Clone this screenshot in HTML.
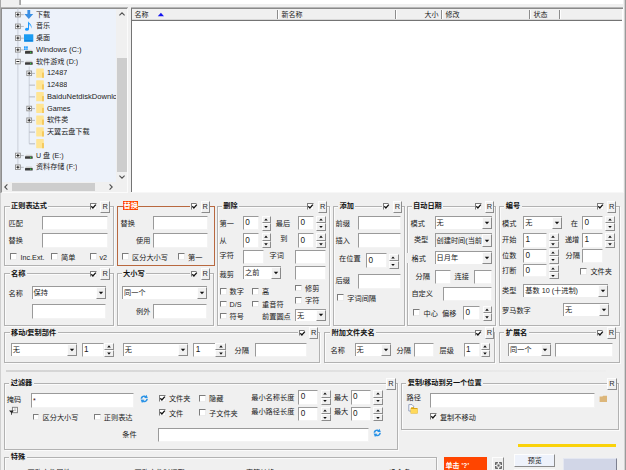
<!DOCTYPE html>
<html lang="zh-CN"><head><meta charset="utf-8"><title>Bulk Rename Utility</title>
<style>
html,body{margin:0;padding:0;}
body{width:626px;height:470px;overflow:hidden;background:#f0f0f0;position:relative;font-family:"Liberation Sans", "Noto Sans CJK SC", sans-serif;font-size:7.2px;color:#1a1a1a;}
#root{position:absolute;left:0;top:0;width:626px;height:470px;overflow:hidden;background:#f0f0f0;}
#root div{position:absolute;box-sizing:border-box;}
.t{white-space:nowrap;color:#222;}
.gt{background:#f0f0f0;font-weight:bold;color:#111;}
.gb{border:1px solid #b2b2b2;box-shadow:inset 1px 1px 0 #fbfbfb, 1px 1px 0 #fbfbfb;}
.mask{background:#f0f0f0;}
.ed{background:#fff;border:1px solid;border-color:#9a9a9a #f3f3f3 #f3f3f3 #9a9a9a;overflow:hidden;}
.et{position:absolute;left:1px;top:0;white-space:nowrap;font-size:7.2px;color:#222;}
.co{border-right-width:0;border-bottom-width:0;}
.co .cb{position:absolute;right:0;top:0;bottom:0;background:#f0f0f0;border:1px solid;border-color:#fdfdfd #8a8a8a #8a8a8a #fdfdfd;box-sizing:border-box;}
.co .cb svg{position:absolute;left:50%;top:50%;margin:-2px 0 0 -3.4px;}
.btn{background:#f0f0f0;border:1px solid;border-color:#fdfdfd #8c8c8c #8c8c8c #fdfdfd;}
.rb{text-align:center;font-size:7.4px;color:#2a2a2a;}
.sp i{position:absolute;left:50%;top:50%;width:0;height:0;border:1.7px solid transparent;margin-left:-1.7px;}
.sp i.up{border-bottom:2px solid #111;border-top:none;margin-top:-1.2px;}
.sp i.dn{border-top:2px solid #111;border-bottom:none;margin-top:-0.8px;}
.ck{background:#fff;border:1px solid;border-color:#7c7c7c #ececec #ececec #7c7c7c;}
.ck svg{position:absolute;left:-1px;top:-1px;}
.tr{white-space:nowrap;color:#222;height:12px;line-height:12px;font-size:7.6px;}
.pm{background:#fff;border:1px solid #9a9a9a;}
.pm:before{content:"";position:absolute;left:1px;right:1px;top:50%;margin-top:-0.5px;height:1px;background:#333;}
.pm.plus:after{content:"";position:absolute;top:1px;bottom:1px;left:50%;margin-left:-0.5px;width:1px;background:#333;}
.dv{border-left:1px dotted #b8b8b8;width:0;}
.dh{border-top:1px dotted #b8b8b8;height:0;}
.fold{background:#ffe28e;border-radius:0.5px;}
.fold:after{content:"";position:absolute;right:0;bottom:0;width:2px;height:5px;background:#f5c85a;}
.hs{background:#fff;border-left:1px solid #8c8c8c;width:2px;}
</style></head><body><div id="root">

<div class="" style="left:21px;top:0px;width:602px;height:4px;background:#fff;"></div>
<div class="" style="left:19px;top:0px;width:2px;height:5px;background:linear-gradient(90deg,#b9b9b9,#a0a0a0);"></div>
<div class="" style="left:0px;top:0px;width:1px;height:193px;background:#a8a8a8;"></div>
<div class="" style="left:0px;top:193px;width:1px;height:277px;background:#d0d0d0;"></div>
<div class="" style="left:624px;top:0px;width:1px;height:470px;background:#d2d2d2;"></div>
<div class="" style="left:625px;top:0px;width:1px;height:470px;background:#9a9a9a;"></div>
<div class="" style="left:1px;top:7px;width:127px;height:186px;background:#f0f0f0;border:1px solid;border-color:#8a8a8a #fbfbfb #fbfbfb #8e8e8e;border-top:2px solid #8e8e8e;border-image:none;"></div>
<div class="" style="left:1px;top:7px;width:127px;height:1px;background:#b6b6b6;"></div>
<div class="" style="left:2px;top:9px;width:114px;height:173px;background:#edf2fa;"></div>
<div class="" style="left:117px;top:58px;width:10px;height:114.3px;background:#cdcdcd;"></div>
<svg style="position:absolute;left:118px;top:11px" width="8" height="6" viewBox="0 0 8 6"><path d="M1.4 4.4 L4 1.8 L6.6 4.4" fill="none" stroke="#505050" stroke-width="1.1"/></svg>
<svg style="position:absolute;left:118px;top:174px" width="8" height="6" viewBox="0 0 8 6"><path d="M1.4 1.6 L4 4.2 L6.6 1.6" fill="none" stroke="#505050" stroke-width="1.1"/></svg>
<div class="" style="left:12px;top:183px;width:83px;height:8.3px;background:#cdcdcd;"></div>
<svg style="position:absolute;left:3px;top:183px" width="6" height="8" viewBox="0 0 6 8"><path d="M4.4 1.4 L1.8 4 L4.4 6.6" fill="none" stroke="#505050" stroke-width="1.1"/></svg>
<svg style="position:absolute;left:108px;top:183px" width="6" height="8" viewBox="0 0 6 8"><path d="M1.6 1.4 L4.2 4 L1.6 6.6" fill="none" stroke="#505050" stroke-width="1.1"/></svg>
<svg style="position:absolute;left:0;top:0" width="128" height="193" viewBox="0 0 128 193"><path d="M17.9 8.5 V167.12 M29.2 66.46 V143.64" stroke="#c9ced8" stroke-width="1" fill="none"/><path d="M17.9 14.7 H23.8" stroke="#b4b8c0" stroke-width="1" fill="none"/><rect x="15.5" y="12.3" width="4.8" height="4.6" fill="#fff" stroke="#8f8f8f" stroke-width="0.9"/><path d="M16.4 14.6 H19.4 M17.9 13.1 V16.1" stroke="#222" stroke-width="1" fill="none"/><path transform="translate(23.8 9.7)" d="M3.6 0.2 H6.4 V4.4 H9.4 L5 9.4 L0.6 4.4 H3.6 Z" fill="#3a8fe4"/><path d="M17.9 26.44 H23.8" stroke="#b4b8c0" stroke-width="1" fill="none"/><rect x="15.5" y="24.04" width="4.8" height="4.6" fill="#fff" stroke="#8f8f8f" stroke-width="0.9"/><path d="M16.4 26.34 H19.4 M17.9 24.84 V27.84" stroke="#222" stroke-width="1" fill="none"/><g transform="translate(25 21.24)"><ellipse cx="1.9" cy="8" rx="1.9" ry="1.6" fill="#1e9bff"/><path d="M3 8 V0 C3.6 1.6 7.2 2.6 6.6 7.4 C6.2 4.6 4.8 4 4 3.8 V8 Z" fill="#1e9bff"/><path d="M4 3.6 C5 3.8 6 4.6 6.3 6.2 C6.4 4 5 3 4 2.6 Z" fill="#9ad0ff"/></g><path d="M17.9 38.18 H23.8" stroke="#b4b8c0" stroke-width="1" fill="none"/><rect x="15.5" y="35.78" width="4.8" height="4.6" fill="#fff" stroke="#8f8f8f" stroke-width="0.9"/><path d="M16.4 38.08 H19.4 M17.9 36.58 V39.58" stroke="#222" stroke-width="1" fill="none"/><g transform="translate(24 34.28)"><rect x="0" y="0" width="9.3" height="7.5" fill="#1b9cf2"/><rect x="0.6" y="6" width="8.1" height="1" fill="#1078d0"/></g><path d="M17.9 49.92 H23.8" stroke="#b4b8c0" stroke-width="1" fill="none"/><rect x="15.5" y="47.52" width="4.8" height="4.6" fill="#fff" stroke="#8f8f8f" stroke-width="0.9"/><path d="M16.4 49.82 H19.4 M17.9 48.32 V51.32" stroke="#222" stroke-width="1" fill="none"/><g transform="translate(25 49.72)"><rect x="-1" y="-3.4" width="1.7" height="1.7" fill="#1e9bff"/><rect x="1.1" y="-3.4" width="1.7" height="1.7" fill="#1e9bff"/><rect x="-1" y="-1.4" width="1.7" height="1.7" fill="#1e9bff"/><rect x="1.1" y="-1.4" width="1.7" height="1.7" fill="#1e9bff"/><path d="M1 0 H6.8 L7.7 1.4 H0 Z" fill="#d2d2d2"/><rect x="0" y="1.4" width="7.7" height="2.6" rx="0.5" fill="#3c3c3c"/><rect x="5" y="2.1" width="1.3" height="1.3" fill="#2fc83c"/></g><path d="M17.9 61.66 H23.8" stroke="#b4b8c0" stroke-width="1" fill="none"/><rect x="15.5" y="59.26" width="4.8" height="4.6" fill="#fff" stroke="#8f8f8f" stroke-width="0.9"/><path d="M16.4 61.56 H19.4" stroke="#222" stroke-width="1" fill="none"/><g transform="translate(25 61.46)"><path d="M1 -0.6 H6.8 L7.7 0.8 H0 Z" fill="#d2d2d2"/><rect x="0" y="0.8" width="7.7" height="2.6" rx="0.5" fill="#3c3c3c"/><rect x="5" y="1.5" width="1.3" height="1.3" fill="#2fc83c"/></g><path d="M29.2 73.4 H35" stroke="#b4b8c0" stroke-width="1" fill="none"/><rect x="26.8" y="71" width="4.8" height="4.6" fill="#fff" stroke="#8f8f8f" stroke-width="0.9"/><path d="M27.7 73.3 H30.7 M29.2 71.8 V74.8" stroke="#222" stroke-width="1" fill="none"/><rect x="36.2" y="68.6" width="7.6" height="9.2" rx="0.4" fill="#ffe594"/><rect x="42.2" y="72.6" width="1.6" height="5.2" fill="#f3c451"/><path d="M29.2 85.14 H35" stroke="#b4b8c0" stroke-width="1" fill="none"/><rect x="36.2" y="80.34" width="7.6" height="9.2" rx="0.4" fill="#ffe594"/><rect x="42.2" y="84.34" width="1.6" height="5.2" fill="#f3c451"/><path d="M29.2 96.88 H35" stroke="#b4b8c0" stroke-width="1" fill="none"/><rect x="36.2" y="92.08" width="7.6" height="9.2" rx="0.4" fill="#ffe594"/><rect x="42.2" y="96.08" width="1.6" height="5.2" fill="#f3c451"/><path d="M29.2 108.62 H35" stroke="#b4b8c0" stroke-width="1" fill="none"/><rect x="26.8" y="106.22" width="4.8" height="4.6" fill="#fff" stroke="#8f8f8f" stroke-width="0.9"/><path d="M27.7 108.52 H30.7 M29.2 107.02 V110.02" stroke="#222" stroke-width="1" fill="none"/><rect x="36.2" y="103.82" width="7.6" height="9.2" rx="0.4" fill="#ffe594"/><rect x="42.2" y="107.82" width="1.6" height="5.2" fill="#f3c451"/><path d="M29.2 120.36 H35" stroke="#b4b8c0" stroke-width="1" fill="none"/><rect x="26.8" y="117.96" width="4.8" height="4.6" fill="#fff" stroke="#8f8f8f" stroke-width="0.9"/><path d="M27.7 120.26 H30.7 M29.2 118.76 V121.76" stroke="#222" stroke-width="1" fill="none"/><rect x="36.2" y="115.56" width="7.6" height="9.2" rx="0.4" fill="#ffe594"/><rect x="42.2" y="119.56" width="1.6" height="5.2" fill="#f3c451"/><path d="M29.2 132.1 H35" stroke="#b4b8c0" stroke-width="1" fill="none"/><rect x="36.2" y="127.3" width="7.6" height="9.2" rx="0.4" fill="#ffe594"/><rect x="42.2" y="131.3" width="1.6" height="5.2" fill="#f3c451"/><path d="M29.2 143.84 H35" stroke="#b4b8c0" stroke-width="1" fill="none"/><rect x="36.2" y="139.04" width="7.6" height="9.2" rx="0.4" fill="#ffe594"/><rect x="42.2" y="143.04" width="1.6" height="5.2" fill="#f3c451"/><path d="M17.9 155.58 H23.8" stroke="#b4b8c0" stroke-width="1" fill="none"/><rect x="15.5" y="153.18" width="4.8" height="4.6" fill="#fff" stroke="#8f8f8f" stroke-width="0.9"/><path d="M16.4 155.48 H19.4 M17.9 153.98 V156.98" stroke="#222" stroke-width="1" fill="none"/><g transform="translate(25 155.38)"><path d="M1 -0.6 H6.8 L7.7 0.8 H0 Z" fill="#d2d2d2"/><rect x="0" y="0.8" width="7.7" height="2.6" rx="0.5" fill="#3c3c3c"/><rect x="5" y="1.5" width="1.3" height="1.3" fill="#2fc83c"/></g><path d="M17.9 167.32 H23.8" stroke="#b4b8c0" stroke-width="1" fill="none"/><rect x="15.5" y="164.92" width="4.8" height="4.6" fill="#fff" stroke="#8f8f8f" stroke-width="0.9"/><path d="M16.4 167.22 H19.4 M17.9 165.72 V168.72" stroke="#222" stroke-width="1" fill="none"/><g transform="translate(25 167.12)"><path d="M1 -0.6 H6.8 L7.7 0.8 H0 Z" fill="#d2d2d2"/><rect x="0" y="0.8" width="7.7" height="2.6" rx="0.5" fill="#3c3c3c"/><rect x="5" y="1.5" width="1.3" height="1.3" fill="#2fc83c"/></g></svg>
<div class="tr" style="left:36px;top:8.7px;font-size:7.1px;max-width:80.4px;overflow:hidden;">下载</div>
<div class="tr" style="left:36px;top:20.44px;font-size:7.1px;max-width:80.4px;overflow:hidden;">音乐</div>
<div class="tr" style="left:36px;top:32.18px;font-size:7.1px;max-width:80.4px;overflow:hidden;">桌面</div>
<div class="tr" style="left:36px;top:43.92px;font-size:7.6px;max-width:80.4px;overflow:hidden;">Windows (C:)</div>
<div class="tr" style="left:36px;top:55.66px;font-size:7.1px;max-width:80.4px;overflow:hidden;">软件游戏 (D:)</div>
<div class="tr" style="left:47px;top:67.4px;font-size:7.3px;max-width:69.4px;overflow:hidden;">12487</div>
<div class="tr" style="left:47px;top:79.14px;font-size:7.3px;max-width:69.4px;overflow:hidden;">12488</div>
<div class="tr" style="left:47px;top:90.88px;font-size:7.6px;max-width:69.4px;overflow:hidden;">BaiduNetdiskDownlc</div>
<div class="tr" style="left:47px;top:102.62px;font-size:7.3px;max-width:69.4px;overflow:hidden;">Games</div>
<div class="tr" style="left:47px;top:114.36px;font-size:7.1px;max-width:69.4px;overflow:hidden;">软件类</div>
<div class="tr" style="left:47px;top:126.1px;font-size:7.1px;max-width:69.4px;overflow:hidden;">天翼云盘下载</div>
<div class="tr" style="left:36px;top:149.58px;font-size:7.1px;max-width:80.4px;overflow:hidden;">U 盘 (E:)</div>
<div class="tr" style="left:36px;top:161.32px;font-size:7.1px;max-width:80.4px;overflow:hidden;">资料存储 (F:)</div>
<div class="" style="left:131px;top:7px;width:492px;height:185px;background:#fff;border-left:1px solid #747474;border-top:2px solid #8a8a8a;"></div>
<div class="" style="left:623px;top:7px;width:1px;height:186px;background:#f7f7f7;"></div>
<div class="" style="left:131px;top:192px;width:492px;height:1px;background:#f7f7f7;"></div>
<div class="" style="left:131px;top:7px;width:492px;height:1px;background:#b6b6b6;"></div>
<div class="" style="left:132px;top:9px;width:490px;height:12px;background:#f0f0f0;border-bottom:1px solid #747474;"></div>
<div class="" style="left:132px;top:19px;width:490px;height:1px;background:#d9d9d9;"></div>
<div class="hs" style="left:277.2px;top:9.6px;width:2px;height:9.8px;"></div>
<div class="hs" style="left:394.8px;top:9.6px;width:2px;height:9.8px;"></div>
<div class="hs" style="left:441.2px;top:9.6px;width:2px;height:9.8px;"></div>
<div class="hs" style="left:529.4px;top:9.6px;width:2px;height:9.8px;"></div>
<div class="hs" style="left:558.8px;top:9.6px;width:2px;height:9.8px;"></div>
<div class="t " style="top:9.7px;height:10px;line-height:10px;font-size:7px;left:134.5px;">名称</div>
<svg style="position:absolute;left:157px;top:12px" width="8" height="5" viewBox="0 0 8 5"><path d="M0.8 4.3 L3.9 0.8 L7 4.3 Z" fill="#1414f0"/></svg>
<div class="t " style="top:9.7px;height:10px;line-height:10px;font-size:7px;left:281.5px;">新名称</div>
<div class="t " style="top:9.7px;height:10px;line-height:10px;font-size:7px;right:187.4px;text-align:right;">大小</div>
<div class="t " style="top:9.7px;height:10px;line-height:10px;font-size:7px;left:445.5px;">修改</div>
<div class="t " style="top:9.7px;height:10px;line-height:10px;font-size:7px;left:533.5px;">状态</div>
<div class="gb" style="left:4.3px;top:205.8px;width:109.6px;height:59.9px;"></div>
<div class="t gt" style="left:9.5px;top:200.7px;height:10px;line-height:10px;font-size:7.2px;padding:0 1.5px 0 1.5px;">正则表达式</div>
<div class="mask" style="left:89.5px;top:205.3px;width:10.9px;height:3px;"></div>
<div class="ck" style="left:90px;top:203.3px;width:6.6px;height:6.6px;"><svg viewBox="0 0 7 7" width="7" height="7"><path d="M1.3 3.3 L2.9 5 L5.8 1.6" fill="none" stroke="#111" stroke-width="1.3"/></svg></div>
<div class="btn rb" style="left:100px;top:200.8px;width:10.2px;height:12.2px;line-height:10.6px">R</div>
<div class="t " style="top:218.9px;height:10px;line-height:10px;font-size:7.2px;left:8.5px;">匹配</div>
<div class="ed" style="left:41.8px;top:216px;width:66px;height:14px;"></div>
<div class="t " style="top:235.9px;height:10px;line-height:10px;font-size:7.2px;left:8.5px;">替换</div>
<div class="ed" style="left:41.8px;top:233.1px;width:66px;height:14.6px;"></div>
<div class="ck" style="left:10px;top:253.3px;width:6.6px;height:6.6px;"></div>
<div class="t " style="top:252.5px;height:10px;line-height:10px;font-size:7.2px;left:20.5px;">Inc.Ext.</div>
<div class="ck" style="left:51px;top:253.3px;width:6.6px;height:6.6px;"></div>
<div class="t " style="top:252.5px;height:10px;line-height:10px;font-size:7.2px;left:61px;">简单</div>
<div class="ck" style="left:90px;top:253.3px;width:6.6px;height:6.6px;"></div>
<div class="t " style="top:252.5px;height:10px;line-height:10px;font-size:7.2px;left:99.5px;">v2</div>
<div class="gb" style="left:116.5px;top:205.8px;width:98px;height:59.9px;border-color:#b8683f;box-shadow:none;"></div>
<div class="t gt" style="left:123px;top:201.3px;height:9px;line-height:9px;font-size:7.2px;background:#ff4500;color:#fff;padding:0 0.5px">替换</div>
<div class="mask" style="left:190px;top:205.3px;width:11px;height:3px;"></div>
<div class="ck" style="left:190.5px;top:203.3px;width:6.6px;height:6.6px;"><svg viewBox="0 0 7 7" width="7" height="7"><path d="M1.3 3.3 L2.9 5 L5.8 1.6" fill="none" stroke="#111" stroke-width="1.3"/></svg></div>
<div class="btn rb" style="left:200.6px;top:200.8px;width:9.4px;height:12.2px;line-height:10.6px">R</div>
<div class="t " style="top:218.9px;height:10px;line-height:10px;font-size:7.2px;left:120.5px;">替换</div>
<div class="ed" style="left:152.7px;top:216px;width:55.5px;height:14px;"></div>
<div class="t " style="top:235.9px;height:10px;line-height:10px;font-size:7.2px;right:475.6px;text-align:right;">使用</div>
<div class="ed" style="left:152.7px;top:233.1px;width:55.5px;height:14.6px;"></div>
<div class="ck" style="left:122px;top:253.3px;width:6.6px;height:6.6px;"></div>
<div class="t " style="top:252.5px;height:10px;line-height:10px;font-size:7.2px;left:132px;">区分大小写</div>
<div class="ck" style="left:178.2px;top:253.3px;width:6.6px;height:6.6px;"></div>
<div class="t " style="top:252.5px;height:10px;line-height:10px;font-size:7.2px;left:188px;">第一</div>
<div class="gb" style="left:217px;top:205.8px;width:112.8px;height:119.9px;"></div>
<div class="t gt" style="left:221.7px;top:200.7px;height:10px;line-height:10px;font-size:7.2px;padding:0 1.5px 0 1.5px;">删除</div>
<div class="mask" style="left:306.9px;top:205.3px;width:11.7px;height:3px;"></div>
<div class="ck" style="left:307.4px;top:203.3px;width:6.6px;height:6.6px;"><svg viewBox="0 0 7 7" width="7" height="7"><path d="M1.3 3.3 L2.9 5 L5.8 1.6" fill="none" stroke="#111" stroke-width="1.3"/></svg></div>
<div class="btn rb" style="left:318.2px;top:200.8px;width:9px;height:12.2px;line-height:10.6px">R</div>
<div class="t " style="top:218.9px;height:10px;line-height:10px;font-size:7.2px;left:219.5px;">第一</div>
<div class="ed" style="left:243px;top:216px;width:16.3px;height:14px;"><span class="et" style="left:1.3px;line-height:12.4px;font-size:8.2px">0</span></div>
<div class="btn sp" style="left:261.5px;top:215.9px;width:9.8px;height:7.4px;"></div>
<div class="btn sp" style="left:261.5px;top:223.3px;width:9.8px;height:7.4px;"></div>
<svg style="position:absolute;left:263.1px;top:215.9px" width="6" height="16" viewBox="0 0 6 16"><path d="M3 2.4 L4.8 4.6 H1.2 Z M3 12.1 L4.8 9.9 H1.2 Z" fill="#111"/></svg>
<div class="t " style="top:218.9px;height:10px;line-height:10px;font-size:7.2px;left:275.8px;">最后</div>
<div class="ed" style="left:298.2px;top:216px;width:16.3px;height:14px;"><span class="et" style="left:1.3px;line-height:12.4px;font-size:8.2px">0</span></div>
<div class="btn sp" style="left:316.3px;top:215.9px;width:10px;height:7.4px;"></div>
<div class="btn sp" style="left:316.3px;top:223.3px;width:10px;height:7.4px;"></div>
<svg style="position:absolute;left:318px;top:215.9px" width="6" height="16" viewBox="0 0 6 16"><path d="M3 2.4 L4.8 4.6 H1.2 Z M3 12.1 L4.8 9.9 H1.2 Z" fill="#111"/></svg>
<div class="t " style="top:235.9px;height:10px;line-height:10px;font-size:7.2px;left:219.5px;">从</div>
<div class="ed" style="left:243px;top:233.1px;width:16.3px;height:14.6px;"><span class="et" style="left:1.3px;line-height:13px;font-size:8.2px">0</span></div>
<div class="btn sp" style="left:261.5px;top:233px;width:9.8px;height:7.7px;"></div>
<div class="btn sp" style="left:261.5px;top:240.7px;width:9.8px;height:7.7px;"></div>
<svg style="position:absolute;left:263.1px;top:233px" width="6" height="16" viewBox="0 0 6 16"><path d="M3 2.55 L4.8 4.75 H1.2 Z M3 12.55 L4.8 10.35 H1.2 Z" fill="#111"/></svg>
<div class="t " style="top:234.4px;height:10px;line-height:10px;font-size:7.2px;left:280.2px;">到</div>
<div class="ed" style="left:298.2px;top:233.1px;width:16.3px;height:14.6px;"><span class="et" style="left:1.3px;line-height:13px;font-size:8.2px">0</span></div>
<div class="btn sp" style="left:316.3px;top:233px;width:10px;height:7.7px;"></div>
<div class="btn sp" style="left:316.3px;top:240.7px;width:10px;height:7.7px;"></div>
<svg style="position:absolute;left:318px;top:233px" width="6" height="16" viewBox="0 0 6 16"><path d="M3 2.55 L4.8 4.75 H1.2 Z M3 12.55 L4.8 10.35 H1.2 Z" fill="#111"/></svg>
<div class="t " style="top:251.3px;height:10px;line-height:10px;font-size:7.2px;left:219.5px;">字符</div>
<div class="ed" style="left:243px;top:250.4px;width:21px;height:13.6px;"></div>
<div class="t " style="top:251.3px;height:10px;line-height:10px;font-size:7.2px;left:269.5px;">字词</div>
<div class="ed" style="left:295.2px;top:250.4px;width:30.9px;height:13.6px;"></div>
<div class="t " style="top:269.7px;height:10px;line-height:10px;font-size:7.2px;left:219.5px;">裁剪</div>
<div class="ed co" style="left:243px;top:266.3px;width:38.3px;height:12.7px;"><span class="et" style="line-height:11.9px">之前</span><span class="cb" style="width:10px"><svg width="6" height="4" viewBox="0 0 6 4"><path d="M0.8 0.7 H5.2 L3 3.2 Z" fill="#111"/></svg></span></div>
<div class="ed" style="left:295.2px;top:266.3px;width:30.9px;height:13.5px;"></div>
<div class="ck" style="left:220px;top:288px;width:6.6px;height:6.6px;"></div>
<div class="t " style="top:287.2px;height:10px;line-height:10px;font-size:7.2px;left:229.5px;">数字</div>
<div class="ck" style="left:252.3px;top:288px;width:6.6px;height:6.6px;"></div>
<div class="t " style="top:287.2px;height:10px;line-height:10px;font-size:7.2px;left:262px;">高</div>
<div class="ck" style="left:220px;top:300.8px;width:6.6px;height:6.6px;"></div>
<div class="t " style="top:300px;height:10px;line-height:10px;font-size:7.2px;left:229.5px;">D/S</div>
<div class="ck" style="left:252.3px;top:300.8px;width:6.6px;height:6.6px;"></div>
<div class="t " style="top:300px;height:10px;line-height:10px;font-size:7.2px;left:262px;">重音符</div>
<div class="ck" style="left:220px;top:312.9px;width:6.6px;height:6.6px;"></div>
<div class="t " style="top:312.1px;height:10px;line-height:10px;font-size:7.2px;left:229.5px;">符号</div>
<div class="t " style="top:312.1px;height:10px;line-height:10px;font-size:7.2px;left:262px;">前置圆点</div>
<div class="ck" style="left:295.1px;top:284.5px;width:6.6px;height:6.6px;"></div>
<div class="t " style="top:283.7px;height:10px;line-height:10px;font-size:7.2px;left:305.1px;">修剪</div>
<div class="ck" style="left:295.1px;top:297px;width:6.6px;height:6.6px;"></div>
<div class="t " style="top:296.2px;height:10px;line-height:10px;font-size:7.2px;left:305.1px;">字符</div>
<div class="ed co" style="left:295.1px;top:308.5px;width:31px;height:12.2px;"><span class="et" style="line-height:11.4px">无</span><span class="cb" style="width:10px"><svg width="6" height="4" viewBox="0 0 6 4"><path d="M0.8 0.7 H5.2 L3 3.2 Z" fill="#111"/></svg></span></div>
<div class="gb" style="left:333.1px;top:205.8px;width:71.6px;height:119.9px;"></div>
<div class="t gt" style="left:338px;top:200.7px;height:10px;line-height:10px;font-size:7.2px;padding:0 1.5px 0 1.5px;">添加</div>
<div class="mask" style="left:382.1px;top:205.3px;width:11.3px;height:3px;"></div>
<div class="ck" style="left:382.6px;top:203.3px;width:6.6px;height:6.6px;"><svg viewBox="0 0 7 7" width="7" height="7"><path d="M1.3 3.3 L2.9 5 L5.8 1.6" fill="none" stroke="#111" stroke-width="1.3"/></svg></div>
<div class="btn rb" style="left:393px;top:200.8px;width:9px;height:12.2px;line-height:10.6px">R</div>
<div class="t " style="top:218.9px;height:10px;line-height:10px;font-size:7.2px;left:335.5px;">前缀</div>
<div class="ed" style="left:358px;top:216px;width:42.7px;height:14px;"></div>
<div class="t " style="top:235.9px;height:10px;line-height:10px;font-size:7.2px;left:335.5px;">插入</div>
<div class="ed" style="left:358px;top:233.1px;width:42.7px;height:14.6px;"></div>
<div class="t " style="top:253.7px;height:10px;line-height:10px;font-size:7.2px;left:339px;">在位置</div>
<div class="ed" style="left:366.2px;top:253px;width:20.9px;height:14.6px;"><span class="et" style="left:1.3px;line-height:13px;font-size:8.2px">0</span></div>
<div class="btn sp" style="left:388.5px;top:253.9px;width:10.2px;height:7.4px;"></div>
<div class="btn sp" style="left:388.5px;top:261.3px;width:10.2px;height:7.4px;"></div>
<svg style="position:absolute;left:390.3px;top:253.9px" width="6" height="16" viewBox="0 0 6 16"><path d="M3 2.4 L4.8 4.6 H1.2 Z M3 12.1 L4.8 9.9 H1.2 Z" fill="#111"/></svg>
<div class="t " style="top:276.1px;height:10px;line-height:10px;font-size:7.2px;left:335.5px;">后缀</div>
<div class="ed" style="left:358px;top:274.2px;width:42.7px;height:14.4px;"></div>
<div class="ck" style="left:337.2px;top:294.4px;width:6.6px;height:6.6px;"></div>
<div class="t " style="top:293.5px;height:10px;line-height:10px;font-size:7.2px;left:347.3px;">字词间隔</div>
<div class="gb" style="left:406.6px;top:205.8px;width:89.2px;height:119.9px;"></div>
<div class="t gt" style="left:411.5px;top:200.7px;height:10px;line-height:10px;font-size:7.2px;padding:0 1.5px 0 1.5px;">自动日期</div>
<div class="mask" style="left:474.6px;top:205.3px;width:10.6px;height:3px;"></div>
<div class="ck" style="left:475.1px;top:203.3px;width:6.6px;height:6.6px;"><svg viewBox="0 0 7 7" width="7" height="7"><path d="M1.3 3.3 L2.9 5 L5.8 1.6" fill="none" stroke="#111" stroke-width="1.3"/></svg></div>
<div class="btn rb" style="left:484.8px;top:200.8px;width:9.2px;height:12.2px;line-height:10.6px">R</div>
<div class="mask" style="left:406px;top:252.6px;width:3px;height:10.6px;"></div>
<div class="t " style="top:218.9px;height:10px;line-height:10px;font-size:7.2px;left:410.5px;">模式</div>
<div class="ed co" style="left:434.5px;top:216px;width:57.6px;height:13px;"><span class="et" style="line-height:12.2px">无</span><span class="cb" style="width:10px"><svg width="6" height="4" viewBox="0 0 6 4"><path d="M0.8 0.7 H5.2 L3 3.2 Z" fill="#111"/></svg></span></div>
<div class="t " style="top:234.6px;height:10px;line-height:10px;font-size:7.2px;left:413.9px;">类型</div>
<div class="ed co" style="left:434.5px;top:233.1px;width:57.6px;height:13.9px;background:#f0f0f0;"><span class="et" style="line-height:13.1px">创建时间(当前</span><span class="cb" style="width:10px"><svg width="6" height="4" viewBox="0 0 6 4"><path d="M0.8 0.7 H5.2 L3 3.2 Z" fill="#111"/></svg></span></div>
<div class="t " style="top:253.7px;height:10px;line-height:10px;font-size:7.2px;left:411.5px;">格式</div>
<div class="ed co" style="left:434.5px;top:251px;width:57.6px;height:13.4px;"><span class="et" style="line-height:12.6px">日月年</span><span class="cb" style="width:10px"><svg width="6" height="4" viewBox="0 0 6 4"><path d="M0.8 0.7 H5.2 L3 3.2 Z" fill="#111"/></svg></span></div>
<div class="t " style="top:272.3px;height:10px;line-height:10px;font-size:7.2px;left:415.5px;">分隔</div>
<div class="ed" style="left:434.5px;top:269.7px;width:16.2px;height:14.1px;"></div>
<div class="t " style="top:272.3px;height:10px;line-height:10px;font-size:7.2px;left:454.5px;">连接</div>
<div class="ed" style="left:474.4px;top:269.7px;width:17.7px;height:14.1px;"></div>
<div class="t " style="top:289.1px;height:10px;line-height:10px;font-size:7.2px;left:411.4px;">自定义</div>
<div class="ed" style="left:443.1px;top:287.4px;width:48.6px;height:14px;"></div>
<div class="ck" style="left:413px;top:309.4px;width:6.6px;height:6.6px;"></div>
<div class="t " style="top:308.6px;height:10px;line-height:10px;font-size:7.2px;left:423.5px;">中心</div>
<div class="t " style="top:308.6px;height:10px;line-height:10px;font-size:7.2px;left:442.1px;">偏移</div>
<div class="ed" style="left:463.3px;top:305.6px;width:16.8px;height:14.4px;"><span class="et" style="left:1.3px;line-height:12.8px;font-size:8.2px">0</span></div>
<div class="btn sp" style="left:482.9px;top:305.5px;width:9.2px;height:7.6px;"></div>
<div class="btn sp" style="left:482.9px;top:313.1px;width:9.2px;height:7.6px;"></div>
<svg style="position:absolute;left:484.2px;top:305.5px" width="6" height="16" viewBox="0 0 6 16"><path d="M3 2.5 L4.8 4.7 H1.2 Z M3 12.4 L4.8 10.2 H1.2 Z" fill="#111"/></svg>
<div class="gb" style="left:499.1px;top:205.8px;width:120.9px;height:119.9px;"></div>
<div class="t gt" style="left:504.3px;top:200.7px;height:10px;line-height:10px;font-size:7.2px;padding:0 1.5px 0 1.5px;">编号</div>
<div class="mask" style="left:596.5px;top:205.3px;width:10.7px;height:3px;"></div>
<div class="ck" style="left:597px;top:203.3px;width:6.6px;height:6.6px;"><svg viewBox="0 0 7 7" width="7" height="7"><path d="M1.3 3.3 L2.9 5 L5.8 1.6" fill="none" stroke="#111" stroke-width="1.3"/></svg></div>
<div class="btn rb" style="left:606.8px;top:200.8px;width:9.6px;height:12.2px;line-height:10.6px">R</div>
<div class="t " style="top:218.9px;height:10px;line-height:10px;font-size:7.2px;left:502px;">模式</div>
<div class="ed co" style="left:523.3px;top:216px;width:38.8px;height:13px;"><span class="et" style="line-height:12.2px">无</span><span class="cb" style="width:10px"><svg width="6" height="4" viewBox="0 0 6 4"><path d="M0.8 0.7 H5.2 L3 3.2 Z" fill="#111"/></svg></span></div>
<div class="t " style="top:218.9px;height:10px;line-height:10px;font-size:7.2px;left:570.7px;">在</div>
<div class="ed" style="left:582.1px;top:216px;width:21.2px;height:14px;"><span class="et" style="left:1.3px;line-height:12.4px;font-size:8.2px">0</span></div>
<div class="btn sp" style="left:604.8px;top:215.9px;width:10px;height:7.4px;"></div>
<div class="btn sp" style="left:604.8px;top:223.3px;width:10px;height:7.4px;"></div>
<svg style="position:absolute;left:606.5px;top:215.9px" width="6" height="16" viewBox="0 0 6 16"><path d="M3 2.4 L4.8 4.6 H1.2 Z M3 12.1 L4.8 9.9 H1.2 Z" fill="#111"/></svg>
<div class="t " style="top:235.3px;height:10px;line-height:10px;font-size:7.2px;left:502px;">开始</div>
<div class="ed" style="left:523.3px;top:233.1px;width:24px;height:14.5px;"><span class="et" style="left:1.3px;line-height:12.9px;font-size:8.2px">1</span></div>
<div class="btn sp" style="left:548.6px;top:233px;width:10px;height:7.7px;"></div>
<div class="btn sp" style="left:548.6px;top:240.7px;width:10px;height:7.7px;"></div>
<svg style="position:absolute;left:550.3px;top:233px" width="6" height="16" viewBox="0 0 6 16"><path d="M3 2.55 L4.8 4.75 H1.2 Z M3 12.55 L4.8 10.35 H1.2 Z" fill="#111"/></svg>
<div class="t " style="top:234.6px;height:10px;line-height:10px;font-size:7.2px;left:564.9px;">递增</div>
<div class="ed" style="left:582.1px;top:233.1px;width:21.2px;height:14.5px;"><span class="et" style="left:1.3px;line-height:12.9px;font-size:8.2px">1</span></div>
<div class="btn sp" style="left:604.8px;top:233px;width:10px;height:7.7px;"></div>
<div class="btn sp" style="left:604.8px;top:240.7px;width:10px;height:7.7px;"></div>
<svg style="position:absolute;left:606.5px;top:233px" width="6" height="16" viewBox="0 0 6 16"><path d="M3 2.55 L4.8 4.75 H1.2 Z M3 12.55 L4.8 10.35 H1.2 Z" fill="#111"/></svg>
<div class="t " style="top:250.5px;height:10px;line-height:10px;font-size:7.2px;left:502px;">位数</div>
<div class="ed" style="left:523.3px;top:249px;width:24px;height:13.8px;"><span class="et" style="left:1.3px;line-height:12.2px;font-size:8.2px">0</span></div>
<div class="btn sp" style="left:548.6px;top:248.9px;width:10px;height:7.4px;"></div>
<div class="btn sp" style="left:548.6px;top:256.3px;width:10px;height:7.4px;"></div>
<svg style="position:absolute;left:550.3px;top:248.9px" width="6" height="16" viewBox="0 0 6 16"><path d="M3 2.4 L4.8 4.6 H1.2 Z M3 12.1 L4.8 9.9 H1.2 Z" fill="#111"/></svg>
<div class="t " style="top:250.7px;height:10px;line-height:10px;font-size:7.2px;left:565.5px;">分隔</div>
<div class="ed" style="left:582.1px;top:249px;width:21.2px;height:14px;"></div>
<div class="t " style="top:266.2px;height:10px;line-height:10px;font-size:7.2px;left:502px;">打断</div>
<div class="ed" style="left:523.3px;top:263.8px;width:24px;height:13.6px;"><span class="et" style="left:1.3px;line-height:12px;font-size:8.2px">0</span></div>
<div class="btn sp" style="left:548.6px;top:264.5px;width:10px;height:7.4px;"></div>
<div class="btn sp" style="left:548.6px;top:271.9px;width:10px;height:7.4px;"></div>
<svg style="position:absolute;left:550.3px;top:264.5px" width="6" height="16" viewBox="0 0 6 16"><path d="M3 2.4 L4.8 4.6 H1.2 Z M3 12.1 L4.8 9.9 H1.2 Z" fill="#111"/></svg>
<div class="ck" style="left:580.4px;top:268.2px;width:6.6px;height:6.6px;"></div>
<div class="t " style="top:267.4px;height:10px;line-height:10px;font-size:7.2px;left:590.4px;">文件夹</div>
<div class="t " style="top:285.9px;height:10px;line-height:10px;font-size:7.2px;left:502px;">类型</div>
<div class="ed co" style="left:523.3px;top:283.5px;width:84.8px;height:13.1px;"><span class="et" style="line-height:12.3px">基数 10 (十进制)</span><span class="cb" style="width:10px"><svg width="6" height="4" viewBox="0 0 6 4"><path d="M0.8 0.7 H5.2 L3 3.2 Z" fill="#111"/></svg></span></div>
<div class="t " style="top:306.1px;height:10px;line-height:10px;font-size:7.2px;left:502px;">罗马数字</div>
<div class="ed co" style="left:563px;top:303.3px;width:46px;height:12.9px;"><span class="et" style="line-height:12.1px">无</span><span class="cb" style="width:10px"><svg width="6" height="4" viewBox="0 0 6 4"><path d="M0.8 0.7 H5.2 L3 3.2 Z" fill="#111"/></svg></span></div>
<div class="gb" style="left:4.3px;top:273.3px;width:109.4px;height:52.5px;"></div>
<div class="t gt" style="left:9.5px;top:269.1px;height:10px;line-height:10px;font-size:7.2px;padding:0 1.5px 0 1.5px;">名称</div>
<div class="mask" style="left:89.5px;top:272.8px;width:10.9px;height:3px;"></div>
<div class="ck" style="left:90px;top:270.8px;width:6.6px;height:6.6px;"><svg viewBox="0 0 7 7" width="7" height="7"><path d="M1.3 3.3 L2.9 5 L5.8 1.6" fill="none" stroke="#111" stroke-width="1.3"/></svg></div>
<div class="btn rb" style="left:100px;top:268.3px;width:10.2px;height:12.2px;line-height:10.6px">R</div>
<div class="t " style="top:288.7px;height:10px;line-height:10px;font-size:7.2px;left:8.5px;">名称</div>
<div class="ed co" style="left:31.6px;top:286px;width:74.3px;height:13px;"><span class="et" style="line-height:12.2px">保持</span><span class="cb" style="width:10px"><svg width="6" height="4" viewBox="0 0 6 4"><path d="M0.8 0.7 H5.2 L3 3.2 Z" fill="#111"/></svg></span></div>
<div class="ed" style="left:31.6px;top:304px;width:74.3px;height:14.6px;"></div>
<div class="gb" style="left:116.5px;top:273.3px;width:97.8px;height:52.6px;"></div>
<div class="t gt" style="left:121.5px;top:269.1px;height:10px;line-height:10px;font-size:7.2px;padding:0 1.5px 0 1.5px;">大小写</div>
<div class="mask" style="left:190px;top:272.8px;width:11px;height:3px;"></div>
<div class="ck" style="left:190.5px;top:270.8px;width:6.6px;height:6.6px;"><svg viewBox="0 0 7 7" width="7" height="7"><path d="M1.3 3.3 L2.9 5 L5.8 1.6" fill="none" stroke="#111" stroke-width="1.3"/></svg></div>
<div class="btn rb" style="left:200.6px;top:268.3px;width:9.4px;height:12.2px;line-height:10.6px">R</div>
<div class="ed co" style="left:122px;top:286px;width:84.9px;height:13px;"><span class="et" style="line-height:12.2px">同一个</span><span class="cb" style="width:10px"><svg width="6" height="4" viewBox="0 0 6 4"><path d="M0.8 0.7 H5.2 L3 3.2 Z" fill="#111"/></svg></span></div>
<div class="t " style="top:307.1px;height:10px;line-height:10px;font-size:7.2px;right:475.6px;text-align:right;">例外</div>
<div class="ed" style="left:152.7px;top:304px;width:54px;height:14.6px;"></div>
<div class="gb" style="left:4.3px;top:332.3px;width:316.2px;height:30.5px;"></div>
<div class="t gt" style="left:9.5px;top:328.1px;height:10px;line-height:10px;font-size:7.2px;padding:0 1.5px 0 1.5px;">移动/复制部件</div>
<div class="mask" style="left:298.3px;top:331.8px;width:11.1px;height:3px;"></div>
<div class="ck" style="left:298.8px;top:329.8px;width:6.6px;height:6.6px;"><svg viewBox="0 0 7 7" width="7" height="7"><path d="M1.3 3.3 L2.9 5 L5.8 1.6" fill="none" stroke="#111" stroke-width="1.3"/></svg></div>
<div class="btn rb" style="left:309px;top:327.3px;width:9.2px;height:12.2px;line-height:10.6px">R</div>
<div class="ed co" style="left:10.7px;top:343px;width:66.5px;height:13.3px;"><span class="et" style="line-height:12.5px">无</span><span class="cb" style="width:10px"><svg width="6" height="4" viewBox="0 0 6 4"><path d="M0.8 0.7 H5.2 L3 3.2 Z" fill="#111"/></svg></span></div>
<div class="ed" style="left:81.8px;top:343px;width:22.7px;height:14px;"><span class="et" style="left:1.3px;line-height:12.4px;font-size:8.2px">1</span></div>
<div class="btn sp" style="left:103.8px;top:342.9px;width:10.4px;height:7.2px;"></div>
<div class="btn sp" style="left:103.8px;top:350.1px;width:10.4px;height:7.2px;"></div>
<svg style="position:absolute;left:105.7px;top:342.9px" width="6" height="16" viewBox="0 0 6 16"><path d="M3 2.3 L4.8 4.5 H1.2 Z M3 11.8 L4.8 9.6 H1.2 Z" fill="#111"/></svg>
<div class="ed co" style="left:122.7px;top:343px;width:65.8px;height:13.3px;"><span class="et" style="line-height:12.5px">无</span><span class="cb" style="width:10px"><svg width="6" height="4" viewBox="0 0 6 4"><path d="M0.8 0.7 H5.2 L3 3.2 Z" fill="#111"/></svg></span></div>
<div class="ed" style="left:193.4px;top:343px;width:22.6px;height:14px;"><span class="et" style="left:1.3px;line-height:12.4px;font-size:8.2px">1</span></div>
<div class="btn sp" style="left:215.3px;top:342.9px;width:11.2px;height:7.2px;"></div>
<div class="btn sp" style="left:215.3px;top:350.1px;width:11.2px;height:7.2px;"></div>
<svg style="position:absolute;left:217.6px;top:342.9px" width="6" height="16" viewBox="0 0 6 16"><path d="M3 2.3 L4.8 4.5 H1.2 Z M3 11.8 L4.8 9.6 H1.2 Z" fill="#111"/></svg>
<div class="t " style="top:345.5px;height:10px;line-height:10px;font-size:7.2px;left:234.5px;">分隔</div>
<div class="ed" style="left:255.3px;top:342.8px;width:51.5px;height:14.2px;"></div>
<div class="gb" style="left:323.8px;top:332.3px;width:171.6px;height:30.5px;"></div>
<div class="t gt" style="left:330px;top:328.1px;height:10px;line-height:10px;font-size:7.2px;padding:0 1.5px 0 1.5px;">附加文件夹名</div>
<div class="mask" style="left:474.7px;top:331.8px;width:10.5px;height:3px;"></div>
<div class="ck" style="left:475.2px;top:329.8px;width:6.6px;height:6.6px;"><svg viewBox="0 0 7 7" width="7" height="7"><path d="M1.3 3.3 L2.9 5 L5.8 1.6" fill="none" stroke="#111" stroke-width="1.3"/></svg></div>
<div class="btn rb" style="left:484.8px;top:327.3px;width:9.2px;height:12.2px;line-height:10.6px">R</div>
<div class="t " style="top:345.5px;height:10px;line-height:10px;font-size:7.2px;left:330.5px;">名称</div>
<div class="ed co" style="left:354.5px;top:343.4px;width:36.4px;height:12.8px;"><span class="et" style="line-height:12px">无</span><span class="cb" style="width:10px"><svg width="6" height="4" viewBox="0 0 6 4"><path d="M0.8 0.7 H5.2 L3 3.2 Z" fill="#111"/></svg></span></div>
<div class="t " style="top:345.5px;height:10px;line-height:10px;font-size:7.2px;left:396.5px;">分隔</div>
<div class="ed" style="left:414.3px;top:343.4px;width:19.8px;height:13.6px;"></div>
<div class="t " style="top:345.5px;height:10px;line-height:10px;font-size:7.2px;left:439.5px;">层级</div>
<div class="ed" style="left:463.8px;top:343.4px;width:16.7px;height:13.6px;"><span class="et" style="left:1.3px;line-height:12px;font-size:8.2px">1</span></div>
<div class="btn sp" style="left:480.5px;top:343.1px;width:9.8px;height:7.2px;"></div>
<div class="btn sp" style="left:480.5px;top:350.3px;width:9.8px;height:7.2px;"></div>
<svg style="position:absolute;left:482.1px;top:343.1px" width="6" height="16" viewBox="0 0 6 16"><path d="M3 2.3 L4.8 4.5 H1.2 Z M3 11.8 L4.8 9.6 H1.2 Z" fill="#111"/></svg>
<div class="gb" style="left:498.9px;top:332.3px;width:121.1px;height:30.5px;"></div>
<div class="t gt" style="left:504.2px;top:328.1px;height:10px;line-height:10px;font-size:7.2px;padding:0 1.5px 0 1.5px;">扩展名</div>
<div class="mask" style="left:596.3px;top:331.8px;width:10.8px;height:3px;"></div>
<div class="ck" style="left:596.8px;top:329.8px;width:6.6px;height:6.6px;"><svg viewBox="0 0 7 7" width="7" height="7"><path d="M1.3 3.3 L2.9 5 L5.8 1.6" fill="none" stroke="#111" stroke-width="1.3"/></svg></div>
<div class="btn rb" style="left:606.7px;top:327.3px;width:9.4px;height:12.2px;line-height:10.6px">R</div>
<div class="ed co" style="left:508px;top:343px;width:42.5px;height:13.2px;"><span class="et" style="line-height:12.4px">同一个</span><span class="cb" style="width:10px"><svg width="6" height="4" viewBox="0 0 6 4"><path d="M0.8 0.7 H5.2 L3 3.2 Z" fill="#111"/></svg></span></div>
<div class="ed" style="left:554.6px;top:343px;width:58.4px;height:13.8px;"></div>
<div class="" style="left:6px;top:370px;width:600px;height:2px;background:linear-gradient(90deg,#d4d4d4,#dedede 45%,#eeeeee);"></div>
<div class="gb" style="left:4.1px;top:382.7px;width:394px;height:67.4px;"></div>
<div class="t gt" style="left:9.2px;top:377.6px;height:10px;line-height:10px;font-size:7.2px;padding:0 1.5px 0 1.5px;">过滤器</div>
<div class="btn rb" style="left:386.2px;top:377.7px;width:9.6px;height:12.2px;line-height:10.6px">R</div>
<div class="t " style="top:394.7px;height:10px;line-height:10px;font-size:7.2px;left:6.7px;">掩码</div>
<div class="ed" style="left:30.7px;top:392.7px;width:103px;height:15.3px;"><span class="et" style="left:1.3px;line-height:13.7px;font-size:8.2px"><span style="font-size:7px;color:#401010">*</span></span></div>
<svg style="position:absolute;left:139.6px;top:393.7px" width="9" height="10" viewBox="0 0 9 10"><g fill="#2b93e6"><path id="ra" d="M0.6 4.7 C0.8 2.2 3.4 0.9 5.6 1.9 L6.5 0.7 L7.9 4.2 L4.1 4.1 L4.9 3.1 C3.6 2.6 2.4 3.3 2.2 4.7 Z"/><path d="M0.6 4.7 C0.8 2.2 3.4 0.9 5.6 1.9 L6.5 0.7 L7.9 4.2 L4.1 4.1 L4.9 3.1 C3.6 2.6 2.4 3.3 2.2 4.7 Z" transform="rotate(180 4.25 4.9)"/></g></svg>
<svg style="position:absolute;left:8px;top:406px" width="11" height="10" viewBox="0 0 11 10"><rect x="4.4" y="1.3" width="5" height="5.4" fill="#f8f8f8" stroke="#7a7a7a" stroke-width="0.9"/><path d="M6 3 H8 M6 4.4 H8" stroke="#999" stroke-width="0.6"/><path d="M1 4.5 H6 L3.9 6.8 V8.9 L3.1 8.4 V6.8 Z" fill="#222"/></svg>
<div class="ck" style="left:32.5px;top:413.7px;width:6.6px;height:6.6px;"></div>
<div class="t " style="top:412.9px;height:10px;line-height:10px;font-size:7.2px;left:42.5px;">区分大小写</div>
<div class="ck" style="left:94px;top:413.7px;width:6.6px;height:6.6px;"></div>
<div class="t " style="top:412.9px;height:10px;line-height:10px;font-size:7.2px;left:103.8px;">正则表达</div>
<div class="t " style="top:430.1px;height:10px;line-height:10px;font-size:7.2px;left:122.2px;">条件</div>
<div class="ed" style="left:157.6px;top:428.2px;width:211.6px;height:14px;"></div>
<svg style="position:absolute;left:373.2px;top:428.2px" width="9" height="10" viewBox="0 0 9 10"><g fill="#2b93e6"><path id="ra" d="M0.6 4.7 C0.8 2.2 3.4 0.9 5.6 1.9 L6.5 0.7 L7.9 4.2 L4.1 4.1 L4.9 3.1 C3.6 2.6 2.4 3.3 2.2 4.7 Z"/><path d="M0.6 4.7 C0.8 2.2 3.4 0.9 5.6 1.9 L6.5 0.7 L7.9 4.2 L4.1 4.1 L4.9 3.1 C3.6 2.6 2.4 3.3 2.2 4.7 Z" transform="rotate(180 4.25 4.9)"/></g></svg>
<div class="ck" style="left:159.2px;top:395.2px;width:6.6px;height:6.6px;"><svg viewBox="0 0 7 7" width="7" height="7"><path d="M1.3 3.3 L2.9 5 L5.8 1.6" fill="none" stroke="#111" stroke-width="1.3"/></svg></div>
<div class="t " style="top:394.3px;height:10px;line-height:10px;font-size:7.2px;left:168.9px;">文件夹</div>
<div class="ck" style="left:199.3px;top:395.2px;width:6.6px;height:6.6px;"></div>
<div class="t " style="top:394.3px;height:10px;line-height:10px;font-size:7.2px;left:209px;">隐藏</div>
<div class="ck" style="left:159.2px;top:409.4px;width:6.6px;height:6.6px;"><svg viewBox="0 0 7 7" width="7" height="7"><path d="M1.3 3.3 L2.9 5 L5.8 1.6" fill="none" stroke="#111" stroke-width="1.3"/></svg></div>
<div class="t " style="top:408.5px;height:10px;line-height:10px;font-size:7.2px;left:168.9px;">文件</div>
<div class="ck" style="left:199.3px;top:409.4px;width:6.6px;height:6.6px;"></div>
<div class="t " style="top:408.5px;height:10px;line-height:10px;font-size:7.2px;left:209px;">子文件夹</div>
<div class="t " style="top:393.3px;height:10px;line-height:10px;font-size:7.2px;left:251.2px;">最小名称长度</div>
<div class="ed" style="left:298.4px;top:390.4px;width:20.1px;height:14.2px;"><span class="et" style="left:1.3px;line-height:12.6px;font-size:8.2px">0</span></div>
<div class="btn sp" style="left:320.7px;top:390.3px;width:10px;height:7.4px;"></div>
<div class="btn sp" style="left:320.7px;top:397.7px;width:10px;height:7.4px;"></div>
<svg style="position:absolute;left:322.4px;top:390.3px" width="6" height="16" viewBox="0 0 6 16"><path d="M3 2.4 L4.8 4.6 H1.2 Z M3 12.1 L4.8 9.9 H1.2 Z" fill="#111"/></svg>
<div class="t " style="top:393.3px;height:10px;line-height:10px;font-size:7.2px;left:333.9px;">最大</div>
<div class="ed" style="left:350.8px;top:390.4px;width:19.9px;height:14.2px;"><span class="et" style="left:1.3px;line-height:12.6px;font-size:8.2px">0</span></div>
<div class="btn sp" style="left:373.1px;top:390.3px;width:10px;height:7.4px;"></div>
<div class="btn sp" style="left:373.1px;top:397.7px;width:10px;height:7.4px;"></div>
<svg style="position:absolute;left:374.8px;top:390.3px" width="6" height="16" viewBox="0 0 6 16"><path d="M3 2.4 L4.8 4.6 H1.2 Z M3 12.1 L4.8 9.9 H1.2 Z" fill="#111"/></svg>
<div class="t " style="top:407.3px;height:10px;line-height:10px;font-size:7.2px;left:251.2px;">最小路径长度</div>
<div class="ed" style="left:298.4px;top:406.6px;width:20.1px;height:14.2px;"><span class="et" style="left:1.3px;line-height:12.6px;font-size:8.2px">0</span></div>
<div class="btn sp" style="left:320.7px;top:406.6px;width:10px;height:7.4px;"></div>
<div class="btn sp" style="left:320.7px;top:414px;width:10px;height:7.4px;"></div>
<svg style="position:absolute;left:322.4px;top:406.6px" width="6" height="16" viewBox="0 0 6 16"><path d="M3 2.4 L4.8 4.6 H1.2 Z M3 12.1 L4.8 9.9 H1.2 Z" fill="#111"/></svg>
<div class="t " style="top:407.3px;height:10px;line-height:10px;font-size:7.2px;left:333.9px;">最大</div>
<div class="ed" style="left:350.8px;top:406.6px;width:19.9px;height:14.2px;"><span class="et" style="left:1.3px;line-height:12.6px;font-size:8.2px">0</span></div>
<div class="btn sp" style="left:373.1px;top:406.6px;width:10px;height:7.4px;"></div>
<div class="btn sp" style="left:373.1px;top:414px;width:10px;height:7.4px;"></div>
<svg style="position:absolute;left:374.8px;top:406.6px" width="6" height="16" viewBox="0 0 6 16"><path d="M3 2.4 L4.8 4.6 H1.2 Z M3 12.1 L4.8 9.9 H1.2 Z" fill="#111"/></svg>
<div class="gb" style="left:400.9px;top:382.7px;width:218.1px;height:47.2px;"></div>
<div class="t gt" style="left:406.3px;top:377.6px;height:10px;line-height:10px;font-size:7.2px;padding:0 1.5px 0 1.5px;">复制/移动到另一个位置</div>
<div class="btn rb" style="left:607px;top:377.7px;width:9.6px;height:12.2px;line-height:10.6px">R</div>
<div class="t " style="top:393.3px;height:10px;line-height:10px;font-size:7.2px;left:406.5px;">路径</div>
<div class="ed" style="left:429.9px;top:393.1px;width:165.6px;height:14.5px;"></div>
<svg style="position:absolute;left:599px;top:394.6px" width="9" height="8" viewBox="0 0 9 8"><path d="M0.6 1.6 H3.4 L4.2 0.8 H8 V7 H0.6 Z" fill="#dcb67a"/></svg>
<svg style="position:absolute;left:407.6px;top:404.4px" width="11" height="10" viewBox="0 0 11 10"><path d="M0.8 0.6 H4 L5.6 2.2 V7 H0.8 Z" fill="#fdfdff" stroke="#7f8fb4" stroke-width="0.8"/><path d="M2.6 4.4 L3.4 3.2 H5.6 L6.2 3.9 H9.6 V9.4 H2.6 Z" fill="#dba514"/><rect x="2.9" y="5" width="6.5" height="4.2" fill="#ffd95a"/></svg>
<div class="ck" style="left:430px;top:413.4px;width:6.6px;height:6.6px;"><svg viewBox="0 0 7 7" width="7" height="7"><path d="M1.3 3.3 L2.9 5 L5.8 1.6" fill="none" stroke="#111" stroke-width="1.3"/></svg></div>
<div class="t " style="top:412.9px;height:10px;line-height:10px;font-size:7.2px;left:439.9px;">复制不移动</div>
<div class="gb" style="left:4.1px;top:456.8px;width:432.8px;height:23.7px;"></div>
<div class="t gt" style="left:9.2px;top:451.7px;height:10px;line-height:10px;font-size:7.2px;padding:0 1.5px 0 1.5px;">特殊</div>
<div class="t " style="top:468.3px;height:10px;line-height:10px;font-size:7.2px;left:27.5px;">更改文件属性</div>
<div class="t " style="top:468.3px;height:10px;line-height:10px;font-size:7.2px;left:134.5px;">更改文件时间戳</div>
<div class="t " style="top:468.3px;height:10px;line-height:10px;font-size:7.2px;left:245.9px;">字符转换</div>
<div class="t " style="top:468.3px;height:10px;line-height:10px;font-size:7.2px;left:354.5px;">Javascript 重命名</div>
<div class="" style="left:517.6px;top:444.2px;width:98.2px;height:2.6px;background:#fad20a;"></div>
<div class="" style="left:443.8px;top:457.3px;width:43.2px;height:12.7px;background:#ff4500;"></div>
<div class="t " style="top:460.7px;height:10px;line-height:10px;font-size:7px;left:445.5px;font-weight:bold;color:#fff;">单击 '?'</div>
<div class="btn" style="left:492px;top:457.3px;width:12.4px;height:14.7px;"></div>
<svg style="position:absolute;left:495px;top:462px" width="7" height="7" viewBox="0 0 7 7"><rect x="0.8" y="0.8" width="5.4" height="5.4" fill="#fff" stroke="#444" stroke-width="1.2"/><path d="M3.5 0 V7 M0 3.5 H7" stroke="#f0f0f0" stroke-width="1.2"/><rect x="2.4" y="2.4" width="2.2" height="2.2" fill="#666"/></svg>
<div class="btn" style="left:514.4px;top:453.6px;width:40.6px;height:13.4px;background:#eef2fb;text-align:center;line-height:12px;font-size:7px;color:#222;">预览</div>
<div class="" style="left:514.4px;top:469px;width:40.6px;height:2px;background:#fafafa;"></div>
<div class="" style="left:563px;top:457.6px;width:54.4px;height:14.4px;background:#d1d6e7;border:1px solid;border-color:#e4e7f1 #7c8090 #7c8090 #e4e7f1;"></div>
</div></body></html>
